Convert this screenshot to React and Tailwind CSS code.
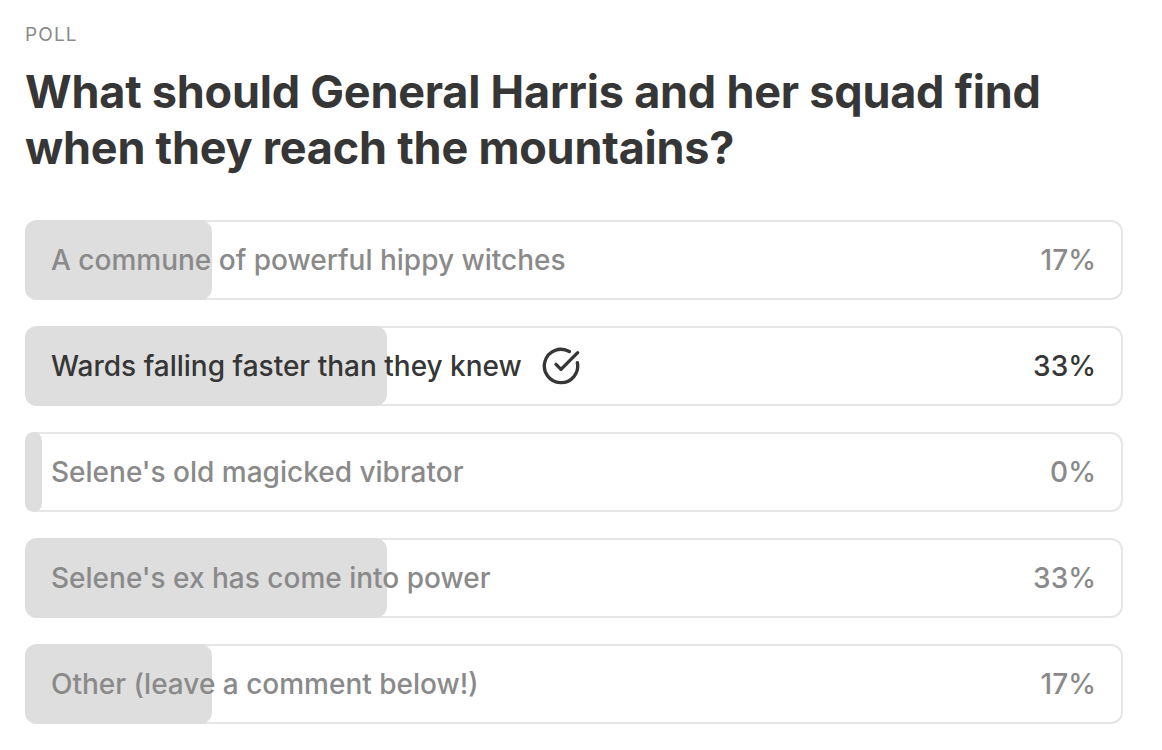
import { CircleCheckBig } from "lucide-react";

const opciones = [
  { texto: "A commune of powerful hippy witches", pct: 17 },
  { texto: "Wards falling faster than they knew", pct: 33, votado: true },
  { texto: "Selene's old magicked vibrator", pct: 0 },
  { texto: "Selene's ex has come into power", pct: 33 },
  { texto: "Other (leave a comment below!)", pct: 17 },
];

export default function App() {
  return (
    <div
      className="min-h-screen bg-white px-[25px] pt-[24px]"
      style={{ fontFamily: "Inter, 'Liberation Sans', sans-serif" }}
    >
      <div className="text-[19px] leading-[22px] tracking-[0.06em] text-[#8a8a8a]">POLL</div>
      <h1 className="mt-[18px] text-[45px] font-bold leading-[56px] tracking-[-0.005em] text-[#363636]">
        What should General Harris and her squad find
        <br />
        when they reach the mountains?
      </h1>

      {/* opciones */}
      <div className="mt-[44px] flex w-[1098px] flex-col gap-[26px]">
        {opciones.map((o) => (
          <div
            key={o.texto}
            className="relative flex h-[80px] items-center justify-between rounded-xl border-2 border-[#e6e6e6] pl-6 pr-[25px]"
          >
            <div
              className="absolute -top-[2px] -bottom-[2px] -left-[2px] rounded-xl bg-[#dedede]"
              style={{ width: o.pct === 0 ? 17 : `${(o.pct / 100) * 1098}px` }}
            />
            <div
              className={`relative flex items-center gap-[19px] text-[28px] font-medium ${
                o.votado ? "text-[#363636]" : "text-[#8a8a8a]"
              }`}
            >
              <span>{o.texto}</span>
              {o.votado && <CircleCheckBig size={40} strokeWidth={2} className="text-[#363636]" />}
            </div>
            <span
              className={`relative text-[28px] font-medium ${
                o.votado ? "text-[#363636]" : "text-[#8a8a8a]"
              }`}
            >
              {o.pct}%
            </span>
          </div>
        ))}
      </div>
    </div>
  );
}
